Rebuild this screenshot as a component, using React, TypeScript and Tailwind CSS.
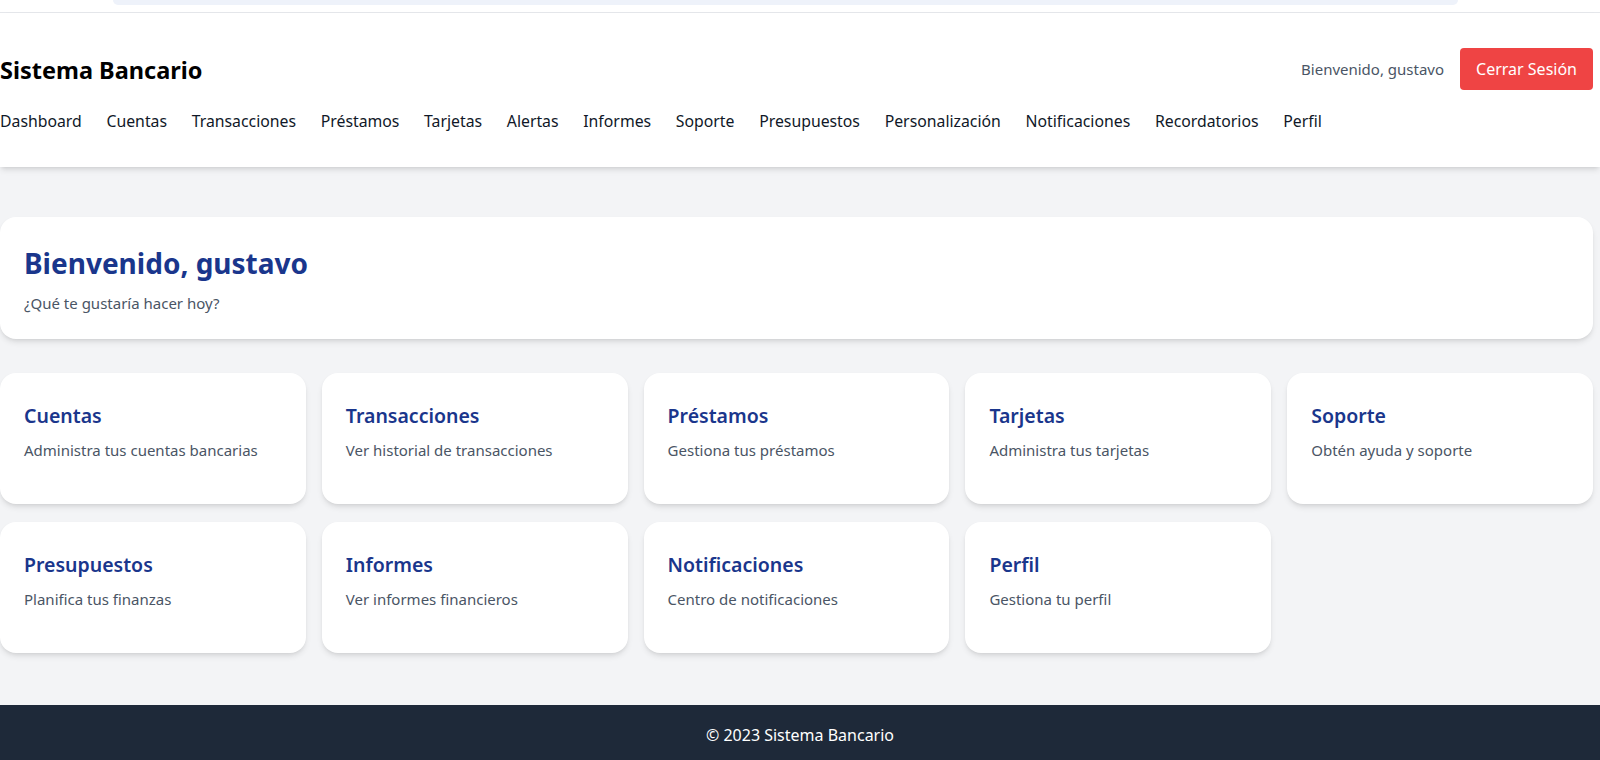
import React from 'react';

const navLinks = [
  'Dashboard',
  'Cuentas',
  'Transacciones',
  'Préstamos',
  'Tarjetas',
  'Alertas',
  'Informes',
  'Soporte',
  'Presupuestos',
  'Personalización',
  'Notificaciones',
  'Recordatorios',
  'Perfil',
];

const cards = [
  { title: 'Cuentas', desc: 'Administra tus cuentas bancarias' },
  { title: 'Transacciones', desc: 'Ver historial de transacciones' },
  { title: 'Préstamos', desc: 'Gestiona tus préstamos' },
  { title: 'Tarjetas', desc: 'Administra tus tarjetas' },
  { title: 'Soporte', desc: 'Obtén ayuda y soporte' },
  { title: 'Presupuestos', desc: 'Planifica tus finanzas' },
  { title: 'Informes', desc: 'Ver informes financieros' },
  { title: 'Notificaciones', desc: 'Centro de notificaciones' },
  { title: 'Perfil', desc: 'Gestiona tu perfil' },
];

const App: React.FC = () => {
  return (
    <div className="min-h-screen bg-gray-100 font-['Noto_Sans',sans-serif]">
      {/* scrolled-off bar above the header */}
      <div className="h-[13px] bg-white border-b border-gray-200 flex pl-[113px]">
        <div className="w-[1345px] h-[5px] bg-[#eef2fa] rounded-b-xl" />
      </div>

      {/* Header */}
      <header className="bg-white shadow-md">
        <div className="w-[1593px] pt-[35px] pb-[34px]">
          <div className="flex items-center justify-between h-[42px]">
            <h1 className="text-[23.5px] leading-8 font-bold text-black mt-0.5">Sistema Bancario</h1>
            <div className="flex items-center gap-4">
              <span className="text-[15px] leading-6 text-gray-600">Bienvenido, gustavo</span>
              <button className="bg-[#ef4444] hover:bg-[#dc2626] text-white px-4 h-[42px] rounded">
                Cerrar Sesión
              </button>
            </div>
          </div>
          <nav className="mt-[19px] flex gap-[24.7px]">
            {navLinks.map((link) => (
              <a key={link} href="#" className="text-[15.8px] leading-6 text-gray-900 hover:text-blue-700">
                {link}
              </a>
            ))}
          </nav>
        </div>
      </header>

      {/* Main */}
      <main className="w-[1593px] pt-[50px] pb-[52px]">
        <div className="bg-white rounded-2xl shadow-md px-6 pt-[28px] pb-6 mb-[34px]">
          <h2 className="text-[28px] leading-9 font-bold text-[#1a368c] mb-[10px]">Bienvenido, gustavo</h2>
          <p className="text-[15px] leading-6 text-gray-600">¿Qué te gustaría hacer hoy?</p>
        </div>

        <div className="grid grid-cols-5 gap-x-4 gap-y-[18px]">
          {cards.map((card) => (
            <div key={card.title} className="bg-white rounded-2xl shadow-md h-[131px] px-6 pt-[29px]">
              <h3 className="text-[19.5px] leading-7 font-semibold text-[#1a368c] mb-2">{card.title}</h3>
              <p className="text-[15px] leading-6 text-gray-600">{card.desc}</p>
            </div>
          ))}
        </div>
      </main>

      {/* Footer */}
      <footer className="bg-gray-800 text-white pt-[18px] pb-4 text-center">
        <p>© 2023 Sistema Bancario</p>
      </footer>
    </div>
  );
};

export default App;
